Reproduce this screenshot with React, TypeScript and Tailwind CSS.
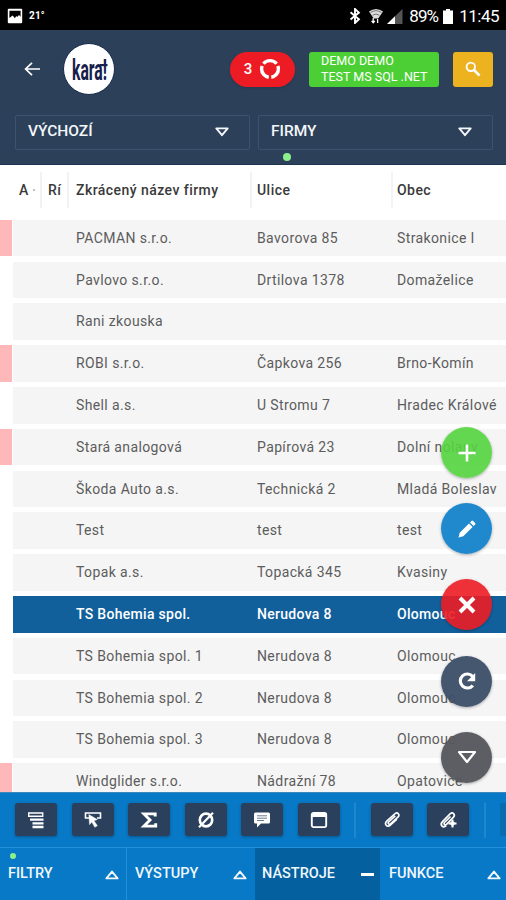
import type { ReactNode } from 'react';
import { clsx } from 'clsx';

interface Company {
  name: string;
  street?: string;
  city?: string;
  flagged?: boolean;
  selected?: boolean;
}

const companies: Company[] = [
  { name: 'PACMAN s.r.o.', street: 'Bavorova 85', city: 'Strakonice I', flagged: true },
  { name: 'Pavlovo s.r.o.', street: 'Drtilova 1378', city: 'Domaželice' },
  { name: 'Rani zkouska' },
  { name: 'ROBI s.r.o.', street: 'Čapkova 256', city: 'Brno-Komín', flagged: true },
  { name: 'Shell a.s.', street: 'U Stromu 7', city: 'Hradec Králové' },
  { name: 'Stará analogová', street: 'Papírová 23', city: 'Dolní nolany', flagged: true },
  { name: 'Škoda Auto a.s.', street: 'Technická 2', city: 'Mladá Boleslav' },
  { name: 'Test', street: 'test', city: 'test' },
  { name: 'Topak a.s.', street: 'Topacká 345', city: 'Kvasiny' },
  { name: 'TS Bohemia spol.', street: 'Nerudova 8', city: 'Olomouc', selected: true },
  { name: 'TS Bohemia spol. 1', street: 'Nerudova 8', city: 'Olomouc' },
  { name: 'TS Bohemia spol. 2', street: 'Nerudova 8', city: 'Olomouc' },
  { name: 'TS Bohemia spol. 3', street: 'Nerudova 8', city: 'Olomouc' },
  { name: 'Windglider s.r.o.', street: 'Nádražní 78', city: 'Opatovice', flagged: true },
];

function Triangle({ up = false, className }: { up?: boolean; className?: string }) {
  return (
    <svg
      viewBox="0 0 14 10"
      fill="none"
      stroke="currentColor"
      strokeWidth="1.9"
      strokeLinejoin="round"
      className={clsx('h-[10px] w-[14px] shrink-0', className)}
    >
      {up ? <path d="M1.4 8.4h11.2L7 1.6z" /> : <path d="M1.3 1.4h11.4L7 8.2z" />}
    </svg>
  );
}

function StatusBar() {
  return (
    <div className="flex h-[30px] shrink-0 items-center bg-black pt-[2px] pr-[7px] pl-[7px] text-white">
      <svg viewBox="0 0 16 16" className="h-[16px] w-[16px]">
        <rect x="0.8" y="0.8" width="14.4" height="14.4" rx="1" fill="#fff" />
        <path d="M2.4 2.8h11.2v6l-1.6-1.7-1.8 2-1-1-1.3 2.2L5.6 7.6 2.4 10z" fill="#000" />
      </svg>
      <span className="ml-[6px] text-[10px] leading-none font-bold tracking-[0.2px]">21°</span>
      <div className="ml-auto flex items-center">
        <svg viewBox="0 0 12 16" className="h-[16px] w-[12px]" fill="none" stroke="#fff" strokeWidth="1.9">
          <path d="M1.5 4.3l8.4 7L6 15V1l3.9 3.6-8.4 7" />
        </svg>
        <svg viewBox="0 0 14 16" className="ml-[8px] h-[16px] w-[14px]">
          <path d="M0 3.5Q7-1.5 14 3.5L9.2 10.5H4.8z" fill="#ddd" />
          <path d="M1.6 4.6Q7 .8 12.4 4.6M3.6 7.2Q7 4.8 10.4 7.2" stroke="#555" strokeWidth="0.8" fill="none" />
          <path d="M4.2 10v4.6M2.6 12.8l1.6 2 1.6-2M8.6 15v-4" stroke="#fff" strokeWidth="1.3" fill="none" />
        </svg>
        <svg viewBox="0 0 16 15" className="ml-[4px] h-[15px] w-[16px]">
          <path d="M15.5 0v15H0z" fill="#555" />
          <path d="M8 7.3V15H0z" fill="#fff" />
        </svg>
        <span className="ml-[6px] text-[17px] leading-none tracking-[-0.9px]">89%</span>
        <svg viewBox="0 0 10 15" className="ml-[5px] h-[15px] w-[10px]" fill="#fff">
          <path d="M3 0h4v1.5h3V15H0V1.5h3z" />
        </svg>
        <span className="ml-[6px] text-[17px] leading-none tracking-[-0.5px]">11:45</span>
      </div>
    </div>
  );
}

function Select({ label, className }: { label: string; className?: string }) {
  return (
    <div
      className={clsx(
        'flex h-[35px] items-center justify-between rounded-[2px] border border-[#3d5270] pr-[20px] pb-[2px] pl-[12px] text-[#f4f6f9]',
        className,
      )}
    >
      <span className="text-[15.5px] leading-none font-medium">{label}</span>
      <Triangle className="mt-[1px]" />
    </div>
  );
}

function Logo() {
  return (
    <div className="ml-[23px] flex h-[52px] w-[52px] items-center justify-center rounded-full border border-[#16294a] bg-white">
      <svg viewBox="0 0 36 26" className="h-[26px] w-[36px] overflow-visible">
        <text
          x="1"
          y="23.5"
          textLength="35"
          lengthAdjust="spacingAndGlyphs"
          fontFamily="Roboto, sans-serif"
          fontWeight="700"
          fontSize="29"
          fill="#16204a"
        >
          kara!
        </text>
        <path d="M29 8h7.5v2.2H29z" fill="#16204a" />
      </svg>
    </div>
  );
}

function Header() {
  return (
    <header className="relative h-[135px] shrink-0 border-b border-[#1d3450] bg-[#2c4059] pt-[13px] text-white">
      <div className="flex h-[52px] items-center">
        <svg viewBox="0 0 16 14" className="ml-[24px] h-[14px] w-[16px]" fill="none" stroke="#fff" strokeWidth="1.7">
          <path d="M8 .8L1.6 7 8 13.2M1.6 7H16" />
        </svg>
        <Logo />
        <div className="ml-[115px] flex h-[35px] w-[65px] items-center justify-center gap-[7px] rounded-full bg-[#ed1c24] shadow-sm">
          <span className="text-[15px] leading-none font-medium">3</span>
          <svg viewBox="0 0 22 22" className="h-[22px] w-[22px]" fill="none" stroke="#fff" strokeWidth="3.4">
            <circle cx="11" cy="11" r="8.4" pathLength="120" strokeDasharray="34 6" strokeDashoffset="-33" />
          </svg>
        </div>
        <div className="ml-[14px] flex h-[35px] w-[130px] flex-col justify-center rounded-[3px] bg-[#4ccf35] pl-[12px] text-[12.5px] leading-[16px] whitespace-nowrap">
          <span>DEMO DEMO</span>
          <span>TEST MS SQL .NET</span>
        </div>
        <div className="ml-[14px] flex h-[35px] w-[40px] items-center justify-center rounded-[3px] bg-[#ecb220]">
          <svg viewBox="0 0 16 16" className="h-[16px] w-[16px]" fill="none" stroke="#fff">
            <circle cx="5.8" cy="5.8" r="4.2" strokeWidth="1.9" />
            <path d="M9 9l5.6 5.6" strokeWidth="2.6" />
          </svg>
        </div>
      </div>
      <div className="mt-[20px] flex gap-[8px] pl-[15px]">
        <Select label="VÝCHOZÍ" className="w-[235px]" />
        <Select label="FIRMY" className="w-[235px]" />
      </div>
      <span className="absolute top-[123px] left-[283px] h-[8px] w-[8px] rounded-full bg-[#8cf08c]" />
    </header>
  );
}

function TableHead() {
  return (
    <div className="flex h-[54.8px] shrink-0 items-start pt-[7px] text-[14px] leading-[36px] font-medium tracking-[0.45px] whitespace-nowrap text-[#3a3a3a]">
      <div className="flex h-[36px] w-[42px] items-center border-r-2 border-[#f3f3f3] pl-[19px]">
        A<span className="ml-[4px] h-[2px] w-[2px] rounded-full bg-[#aaa]" />
      </div>
      <div className="h-[36px] w-[27px] border-r-2 border-[#f3f3f3] pl-[6px]">Rí</div>
      <div className="h-[36px] w-[183px] border-r-2 border-[#f3f3f3] pl-[7px]">Zkrácený název firmy</div>
      <div className="h-[36px] w-[141px] border-r-2 border-[#f3f3f3] pl-[5px]">Ulice</div>
      <div className="pl-[4px]">Obec</div>
    </div>
  );
}

function CompanyRow({ name, street, city, flagged, selected }: Company) {
  return (
    <div className="flex h-[41.8px] shrink-0">
      <div className={clsx('mr-[1.5px] h-[36.6px] w-[11.5px]', flagged && 'bg-[#ffb8ba]')} />
      <div
        className={clsx(
          'grid h-[36.6px] flex-1 grid-cols-[181px_140px_1fr] items-center pt-[0.4px] pl-[63px] text-[14px] whitespace-nowrap',
          selected
            ? 'bg-[#11609c] font-medium tracking-[0.3px] text-white'
            : 'bg-[#f5f5f5] tracking-[0.38px] text-[#5c5c5c]',
        )}
      >
        <span>{name}</span>
        <span>{street}</span>
        <span>{city}</span>
      </div>
    </div>
  );
}

function Fab({ className, children }: { className: string; children: ReactNode }) {
  return (
    <button
      type="button"
      className={clsx(
        'flex h-[51px] w-[51px] items-center justify-center rounded-full text-white shadow-[0_1px_3px_rgba(0,0,0,0.3)]',
        className,
      )}
    >
      {children}
    </button>
  );
}

function FloatingActions() {
  return (
    <div className="absolute top-[427px] right-[14px] flex flex-col gap-[25.2px]">
      <Fab className="bg-[#54d43e]/90">
        <svg viewBox="0 0 18 18" className="h-[18px] w-[18px]" stroke="#fff" strokeWidth="2.6">
          <path d="M9 .5v17M.5 9h17" />
        </svg>
      </Fab>
      <Fab className="bg-[#1c86cb]/98">
        <svg viewBox="0 0 18 18" className="h-[18px] w-[18px]" fill="#fff">
          <path d="M.5 17.5l1.2-4.8L11 3.4l3.6 3.6-9.3 9.3zM12 2.4l1.5-1.5q.8-.7 1.6 0l2 2q.7.8 0 1.6L15.6 6z" />
        </svg>
      </Fab>
      <Fab className="bg-[#ed1c24]/90">
        <svg viewBox="0 0 18 18" className="h-[18px] w-[18px]" stroke="#fff" strokeWidth="4">
          <path d="M2 2l14 14M16 2L2 16" />
        </svg>
      </Fab>
      <Fab className="bg-[#3d4f69]/96">
        <svg viewBox="0 0 20 20" className="h-[20px] w-[20px]">
          <path d="M15.8 14.4A7 7 0 1 1 15.8 5.6" fill="none" stroke="#fff" strokeWidth="3.2" />
          <path d="M18.2 2v8.2H10z" fill="#fff" />
        </svg>
      </Fab>
      <Fab className="bg-[#56575d]/96">
        <svg viewBox="0 0 20 14" className="h-[14px] w-[20px]" fill="none" stroke="#fff" strokeWidth="2.2" strokeLinejoin="round">
          <path d="M2 2h16l-8 10z" />
        </svg>
      </Fab>
    </div>
  );
}

function Tool({ children }: { children?: ReactNode }) {
  return (
    <button
      type="button"
      className="flex h-[33px] w-[42px] shrink-0 items-center justify-center rounded-[3px] bg-[#2b405c] shadow-[0_1px_3px_rgba(0,0,0,0.3)]"
    >
      <svg viewBox="0 0 18 18" className="h-[18px] w-[18px]" fill="none" stroke="#fff">
        {children}
      </svg>
    </button>
  );
}

function Toolbar() {
  return (
    <div className="flex h-[55px] shrink-0 items-start gap-[14.5px] overflow-hidden border-t border-[#3b86bd] bg-[#0879c6] pt-[10px] pl-[15.4px]">
      <Tool>
        <path d="M1.7 2h14v3.2h-14z" strokeWidth="1.4" />
        <path d="M3 8.6h13.5M5.500 12.400h11M5.500 16h11" strokeWidth="2.3" />
      </Tool>
      <Tool>
        <path d="M5 7H1.5V2h15v5H13" strokeWidth="1.6" />
        <path d="M4.8 3.5l8.600 5-3.400 1.200 3.400 5-2.600 1.600-3-5.200-2.300 2.600z" fill="#fff" strokeWidth="0.4" />
      </Tool>
      <Tool>
        <path d="M15.2 5.6V2.9H4L10 9l-6 6.1h11.700v-2.800" strokeWidth="2.9" />
      </Tool>
      <Tool>
        <ellipse cx="9" cy="9" rx="6.2" ry="6.4" strokeWidth="2.6" />
        <path d="M2 16.2L16 1.8" strokeWidth="2.2" />
      </Tool>
      <Tool>
        <path
          d="M2.5 1.5h13q1.5 0 1.5 1.5v8q0 1.5-1.5 1.5H8L4 16.5v-4H2.5Q1 12.5 1 11V3q0-1.5 1.5-1.5z"
          fill="#fff"
          stroke="none"
        />
        <path d="M4 4.8h10M4 7.2h10M4 9.5h7" stroke="#5a6c84" strokeWidth="0.9" />
      </Tool>
      <Tool>
        <rect x="1.8" y="1.9" width="14.4" height="14.2" rx="1.8" strokeWidth="1.9" />
        <path d="M1.8 4h14.4" strokeWidth="4" />
      </Tool>
      <div className="h-[35px] w-[2px] shrink-0 bg-[#2187cd]" />
      <Tool>
        <path
          d="M12.5 5.5l-7 6.500q-1 1.200 0 2t2-.1l8-7.200q1.600-1.800.2-3.400t-3.400-.2l-8.800 8q-2.300 2.400-.6 4.300t4.400 0l7-6.300"
          strokeWidth="1.7"
          transform="translate(.4 -.4) scale(.95)"
        />
      </Tool>
      <Tool>
        <path
          d="M11.5 5.5l-6 6q-1 1.200 0 2t2-.1l7-7.200q1.600-1.800.2-3.400t-3.400-.2l-7.800 8q-2.300 2.400-.6 4.300t4.400 0"
          strokeWidth="1.7"
        />
        <path d="M13.5 8.5v8M9.5 12.5h8" strokeWidth="2" />
        <path d="M13.5 9.5l3 3-3 3-3-3z" fill="#fff" stroke="none" />
      </Tool>
      <div className="h-[35px] w-[2px] shrink-0 bg-[#2187cd]" />
      <div className="h-[33px] w-[42px] shrink-0 rounded-[3px] bg-[#086cae]" />
    </div>
  );
}

const tabs = [
  { label: 'FILTRY', className: 'w-[126px] pr-[7px] pl-[8px]', dot: true },
  { label: 'VÝSTUPY', className: 'w-[129px] border-l border-[#2590da] pr-[8px] pl-[8px]' },
  { label: 'NÁSTROJE', className: 'w-[125px] bg-[#04609e] pr-[6px] pl-[7px]', open: true },
  { label: 'FUNKCE', className: 'w-[126px] pr-[5px] pl-[9px]' },
];

function BottomTabs() {
  return (
    <nav className="flex h-[53px] shrink-0 border-t border-[#2590da] bg-[#0879c6] text-[#f0f7fd]">
      {tabs.map((tab) => (
        <div key={tab.label} className={clsx('relative flex items-center justify-between pt-[1px]', tab.className)}>
          {tab.dot && <span className="absolute top-[5px] left-[10px] h-[6px] w-[6px] rounded-full bg-[#8cf08c]" />}
          <span className="text-[14.5px] leading-none font-medium">{tab.label}</span>
          {tab.open ? <span className="h-[3px] w-[13px] bg-white" /> : <Triangle up />}
        </div>
      ))}
    </nav>
  );
}

export default function App() {
  return (
    <div className="relative flex h-[900px] w-[506px] flex-col overflow-hidden bg-white font-['Roboto',sans-serif]">
      <StatusBar />
      <Header />
      <TableHead />
      <main className="flex min-h-0 flex-1 flex-col overflow-hidden">
        {companies.map((company) => (
          <CompanyRow key={company.name} {...company} />
        ))}
      </main>
      <Toolbar />
      <BottomTabs />
      <FloatingActions />
    </div>
  );
}
